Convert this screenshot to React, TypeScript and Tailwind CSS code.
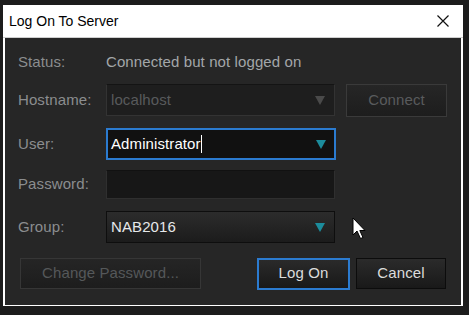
import React from 'react'

const font = { fontFamily: '"Liberation Sans", Arial, sans-serif' }

function Arrow({ color }: { color: string }) {
  return (
    <svg width="10" height="9" viewBox="0 0 10 9" className="shrink-0">
      <polygon points="0,0 10,0 5,9" fill={color} />
    </svg>
  )
}

function Label({ children }: { children: React.ReactNode }) {
  return <div className="w-[88px] shrink-0 text-[15px] tracking-[0.1px] text-[#8b8d8f]">{children}</div>
}

export default function App() {
  return (
    <div className="w-[469px] h-[315px] bg-[#1c1c1c] pl-[3px] pt-[5px] overflow-hidden" style={font}>
      <div className="w-[460px] h-[301px] bg-white flex flex-col">
        {/* title bar */}
        <div className="h-[32px] flex items-center justify-between pl-[6px] pr-[14px] shrink-0">
          <span className="text-[14px] text-black">Log On To Server</span>
          <svg width="12" height="12" viewBox="0 0 12 12">
            <path d="M0.5 0.5 L11.5 11.5 M11.5 0.5 L0.5 11.5" stroke="#111" strokeWidth="1.2" />
          </svg>
        </div>
        <div className="h-px bg-[#cfcfcf] shrink-0" />
        <div className="mx-[2px] h-[267px] bg-[#262626] pl-[13px] pt-[14px] flex flex-col relative text-[15px] tracking-[0.1px]">
          {/* status */}
          <div className="h-[20px] flex items-center">
            <Label>Status:</Label>
            <span className="text-[#a3a6a9]">Connected but not logged on</span>
          </div>
          {/* hostname */}
          <div className="mt-[12px] h-[32px] flex items-center">
            <Label>Hostname:</Label>
            <div className="w-[229px] h-[32px] bg-[#1e1e1e] border border-[#333] border-t-[#141414] flex items-center justify-between pl-[4px] pr-[9px]">
              <span className="text-[#585a5c]">localhost</span>
              <Arrow color="#4a4a4a" />
            </div>
            <button className="ml-[11px] w-[101px] h-[33px] bg-gradient-to-b from-[#262626] to-[#1d1d1d] border border-[#3a3a3a] text-[#595b5d]">
              Connect
            </button>
          </div>
          {/* user */}
          <div className="mt-[12px] h-[32px] flex items-center">
            <Label>User:</Label>
            <div className="w-[230px] h-[32px] bg-[#111111] border-2 border-[#2b7bd0] flex items-center justify-between pl-[3px] pr-[8px]">
              <span className="text-white flex items-center">
                Administrator
                <span className="inline-block w-px h-[18px] bg-white" />
              </span>
              <Arrow color="#1c8c9c" />
            </div>
          </div>
          {/* password */}
          <div className="mt-[10px] h-[29px] flex items-center">
            <Label>Password:</Label>
            <div className="w-[229px] h-[29px] bg-[#171717] border border-[#2f2f2f] border-t-[#111]" />
          </div>
          {/* group */}
          <div className="mt-[12px] h-[32px] flex items-center">
            <Label>Group:</Label>
            <div className="w-[229px] h-[32px] bg-gradient-to-b from-[#2c2c2c] to-[#1c1c1c] border border-[#0e0e0e] flex items-center justify-between pl-[4px] pr-[9px]">
              <span className="text-[#e6e8ea]">NAB2016</span>
              <Arrow color="#1c8c9c" />
            </div>
          </div>
          {/* buttons */}
          <div className="mt-[15px] h-[31px] flex items-center pl-[2px]">
            <button className="w-[181px] h-[31px] bg-gradient-to-b from-[#252525] to-[#1d1d1d] border border-[#363636] text-[#55585a]">
              Change Password...
            </button>
            <button className="ml-[56px] w-[93px] h-[32px] bg-gradient-to-b from-[#2a2a2a] to-[#191919] border-2 border-[#2b7bd0] text-[#dcdcdc]">
              Log On
            </button>
            <button className="ml-[6px] w-[90px] h-[31px] bg-gradient-to-b from-[#2b2b2b] to-[#191919] border border-[#0c0c0c] text-[#dcdcdc]">
              Cancel
            </button>
          </div>
          {/* mouse pointer */}
          <svg className="absolute left-[347px] top-[179px]" width="15" height="24" viewBox="0 0 15 24">
            <path d="M1 1 L1 18 L5 14 L8.5 21.5 L11 20.5 L7.8 13.5 L13 13.5 Z" fill="white" stroke="black" strokeWidth="1" />
          </svg>
        </div>
        <div className="flex-1 bg-white" />
      </div>
    </div>
  )
}
